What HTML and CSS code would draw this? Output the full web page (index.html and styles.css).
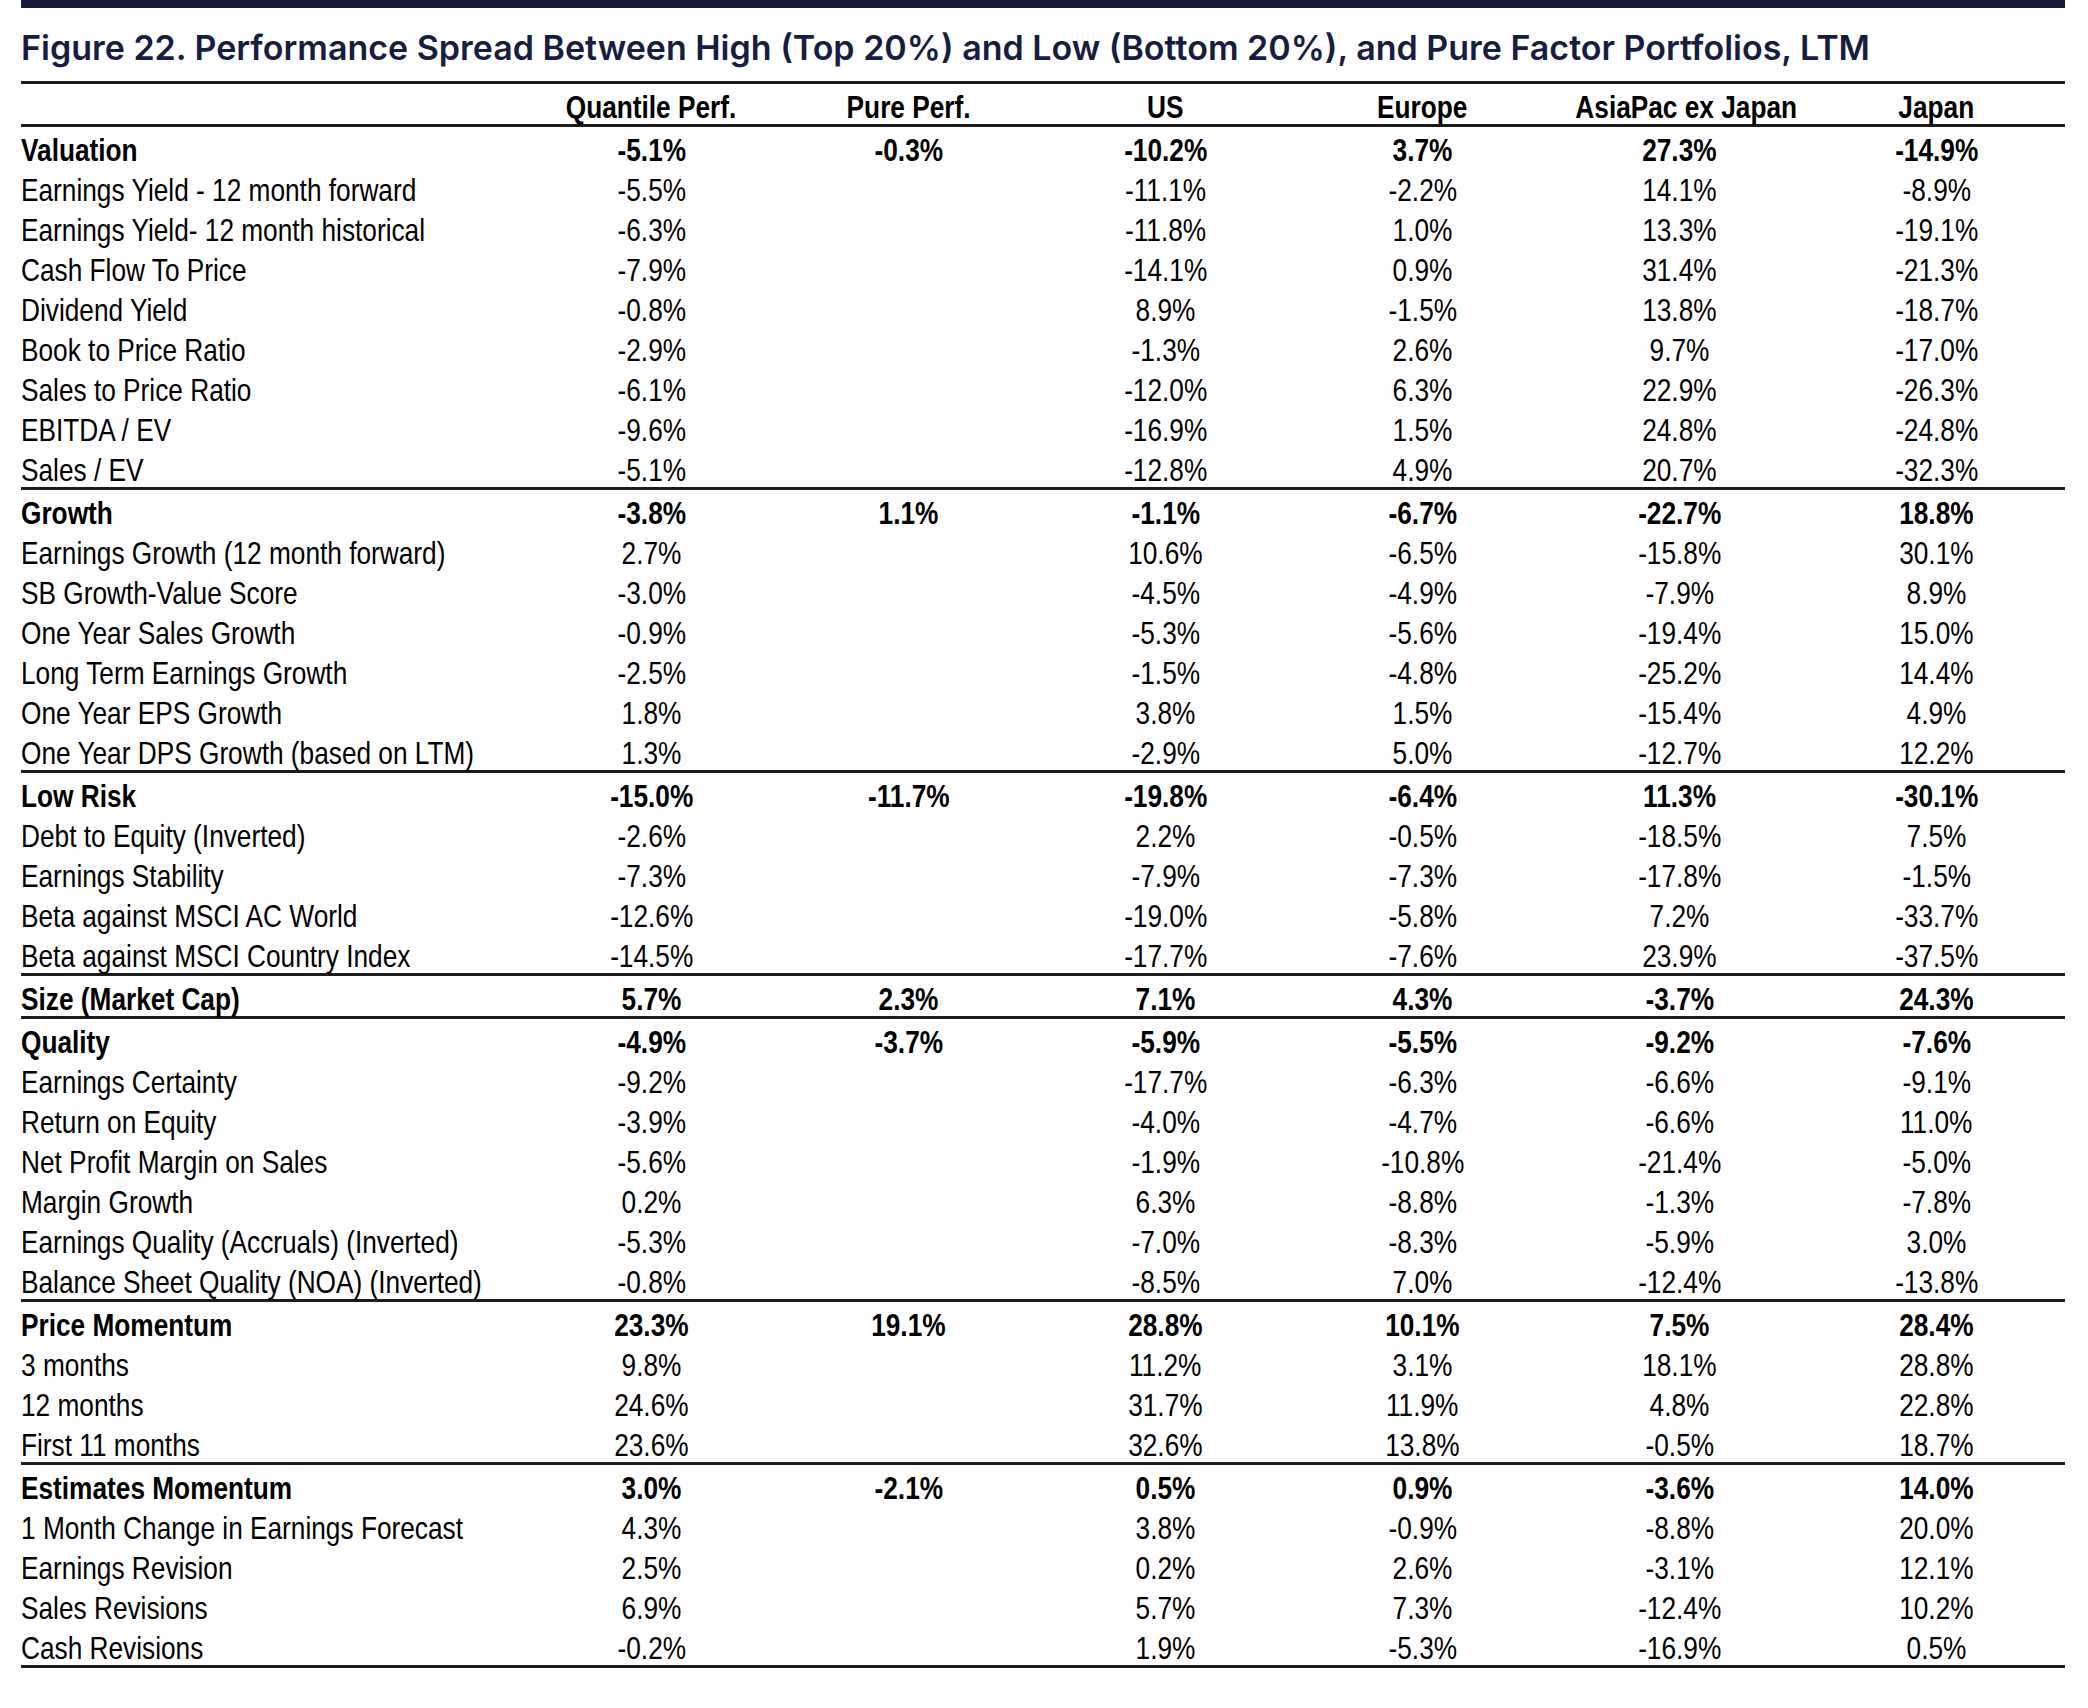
FILE: index.html
```html
<!DOCTYPE html>
<html lang="en">
<head>
    <meta charset="UTF-8">
    <title>Figure 22</title>
    <link rel="stylesheet" href="styles.css">
</head>
<body>
    <div class="page">
        <div class="topbar"></div>
        <h1 class="fig-title">Figure 22. Performance Spread Between High (Top 20%) and Low (Bottom 20%), and Pure Factor Portfolios, LTM</h1>
        <table class="perf">
            <thead>
                <tr>
                    <th class="lbl"></th>
                    <th><span class="nw">Quantile Perf.</span></th>
                    <th><span class="nw">Pure Perf.</span></th>
                    <th><span class="nw">US</span></th>
                    <th><span class="nw">Europe</span></th>
                    <th><span class="nw">AsiaPac ex Japan</span></th>
                    <th><span class="nw">Japan</span></th>
                </tr>
            </thead>
            <tbody id="rows">
                <!-- filled from data below -->
            </tbody>
        </table>
    </div>

    <script>
        var grupos = [
            [['Valuation', '-5.1%', '-0.3%', '-10.2%', '3.7%', '27.3%', '-14.9%'],
             ['Earnings Yield - 12 month forward', '-5.5%', '', '-11.1%', '-2.2%', '14.1%', '-8.9%'],
             ['Earnings Yield- 12 month historical', '-6.3%', '', '-11.8%', '1.0%', '13.3%', '-19.1%'],
             ['Cash Flow To Price', '-7.9%', '', '-14.1%', '0.9%', '31.4%', '-21.3%'],
             ['Dividend Yield', '-0.8%', '', '8.9%', '-1.5%', '13.8%', '-18.7%'],
             ['Book to Price Ratio', '-2.9%', '', '-1.3%', '2.6%', '9.7%', '-17.0%'],
             ['Sales to Price Ratio', '-6.1%', '', '-12.0%', '6.3%', '22.9%', '-26.3%'],
             ['EBITDA / EV', '-9.6%', '', '-16.9%', '1.5%', '24.8%', '-24.8%'],
             ['Sales / EV', '-5.1%', '', '-12.8%', '4.9%', '20.7%', '-32.3%']],
            [['Growth', '-3.8%', '1.1%', '-1.1%', '-6.7%', '-22.7%', '18.8%'],
             ['Earnings Growth (12 month forward)', '2.7%', '', '10.6%', '-6.5%', '-15.8%', '30.1%'],
             ['SB Growth-Value Score', '-3.0%', '', '-4.5%', '-4.9%', '-7.9%', '8.9%'],
             ['One Year Sales Growth', '-0.9%', '', '-5.3%', '-5.6%', '-19.4%', '15.0%'],
             ['Long Term Earnings Growth', '-2.5%', '', '-1.5%', '-4.8%', '-25.2%', '14.4%'],
             ['One Year EPS Growth', '1.8%', '', '3.8%', '1.5%', '-15.4%', '4.9%'],
             ['One Year DPS Growth (based on LTM)', '1.3%', '', '-2.9%', '5.0%', '-12.7%', '12.2%']],
            [['Low Risk', '-15.0%', '-11.7%', '-19.8%', '-6.4%', '11.3%', '-30.1%'],
             ['Debt to Equity (Inverted)', '-2.6%', '', '2.2%', '-0.5%', '-18.5%', '7.5%'],
             ['Earnings Stability', '-7.3%', '', '-7.9%', '-7.3%', '-17.8%', '-1.5%'],
             ['Beta against MSCI AC World', '-12.6%', '', '-19.0%', '-5.8%', '7.2%', '-33.7%'],
             ['Beta against MSCI Country Index', '-14.5%', '', '-17.7%', '-7.6%', '23.9%', '-37.5%']],
            [['Size (Market Cap)', '5.7%', '2.3%', '7.1%', '4.3%', '-3.7%', '24.3%']],
            [['Quality', '-4.9%', '-3.7%', '-5.9%', '-5.5%', '-9.2%', '-7.6%'],
             ['Earnings Certainty', '-9.2%', '', '-17.7%', '-6.3%', '-6.6%', '-9.1%'],
             ['Return on Equity', '-3.9%', '', '-4.0%', '-4.7%', '-6.6%', '11.0%'],
             ['Net Profit Margin on Sales', '-5.6%', '', '-1.9%', '-10.8%', '-21.4%', '-5.0%'],
             ['Margin Growth', '0.2%', '', '6.3%', '-8.8%', '-1.3%', '-7.8%'],
             ['Earnings Quality (Accruals) (Inverted)', '-5.3%', '', '-7.0%', '-8.3%', '-5.9%', '3.0%'],
             ['Balance Sheet Quality (NOA) (Inverted)', '-0.8%', '', '-8.5%', '7.0%', '-12.4%', '-13.8%']],
            [['Price Momentum', '23.3%', '19.1%', '28.8%', '10.1%', '7.5%', '28.4%'],
             ['3 months', '9.8%', '', '11.2%', '3.1%', '18.1%', '28.8%'],
             ['12 months', '24.6%', '', '31.7%', '11.9%', '4.8%', '22.8%'],
             ['First 11 months', '23.6%', '', '32.6%', '13.8%', '-0.5%', '18.7%']],
            [['Estimates Momentum', '3.0%', '-2.1%', '0.5%', '0.9%', '-3.6%', '14.0%'],
             ['1 Month Change in Earnings Forecast', '4.3%', '', '3.8%', '-0.9%', '-8.8%', '20.0%'],
             ['Earnings Revision', '2.5%', '', '0.2%', '2.6%', '-3.1%', '12.1%'],
             ['Sales Revisions', '6.9%', '', '5.7%', '7.3%', '-12.4%', '10.2%'],
             ['Cash Revisions', '-0.2%', '', '1.9%', '-5.3%', '-16.9%', '0.5%']]
        ];

        var corpo = document.getElementById('rows');
        grupos.forEach(function (grupo) {
            grupo.forEach(function (linha, i) {
                var tr = document.createElement('tr');
                // first line of each block is the factor total: bold, ruled above
                if (i === 0) tr.className = 'factor';
                linha.forEach(function (valor, j) {
                    var td = document.createElement('td');
                    if (j === 0) td.className = 'lbl';
                    if (valor !== '') {
                        var span = document.createElement('span');
                        span.className = 'nw';
                        span.textContent = valor;
                        td.appendChild(span);
                    }
                    tr.appendChild(td);
                });
                corpo.appendChild(tr);
            });
        });
    </script>
</body>
</html>
```

FILE: styles.css
```css
body {
    margin: 0;
    background-color: #ffffff;
    font-family: "Liberation Sans", Arial, sans-serif;
    color: #000000;
}

.page {
    width: 2044px;
    margin-left: 21px;
}

.topbar {
    height: 8px;
    background-color: #141b3c;
}

.fig-title {
    margin: 0;
    height: 66px;
    padding-top: 7px;
    line-height: 66px;
    font-family: "Inter", "Noto Sans", sans-serif;
    font-size: 34px;
    font-weight: 600;
    color: #161d3e;
    white-space: nowrap;
}

.perf {
    width: 2044px;
    border-collapse: separate;
    border-spacing: 0;
    table-layout: fixed;
    font-size: 32px;
}

.perf th,
.perf td {
    padding: 6px 0 0 0;
    height: 34px;
    line-height: 34px;
    width: 257px;
    text-align: center;
    white-space: nowrap;
}

.perf .lbl {
    width: 502px;
    text-align: left;
}

/* Arial Narrow look: Liberation Sans squeezed to 82% */
.nw {
    display: inline-block;
    transform: scaleX(0.82);
    transform-origin: center center;
}

.lbl .nw {
    transform-origin: left center;
}

.perf th {
    font-weight: bold;
    border-top: 3px solid #1c1c1c;
    border-bottom: 3px solid #1c1c1c;
}

.perf tr.factor td {
    font-weight: bold;
}

.perf tbody tr.factor:not(:first-child) td {
    border-top: 3px solid #1c1c1c;
}

.perf tbody tr:last-child td {
    border-bottom: 3px solid #1c1c1c;
}
```
